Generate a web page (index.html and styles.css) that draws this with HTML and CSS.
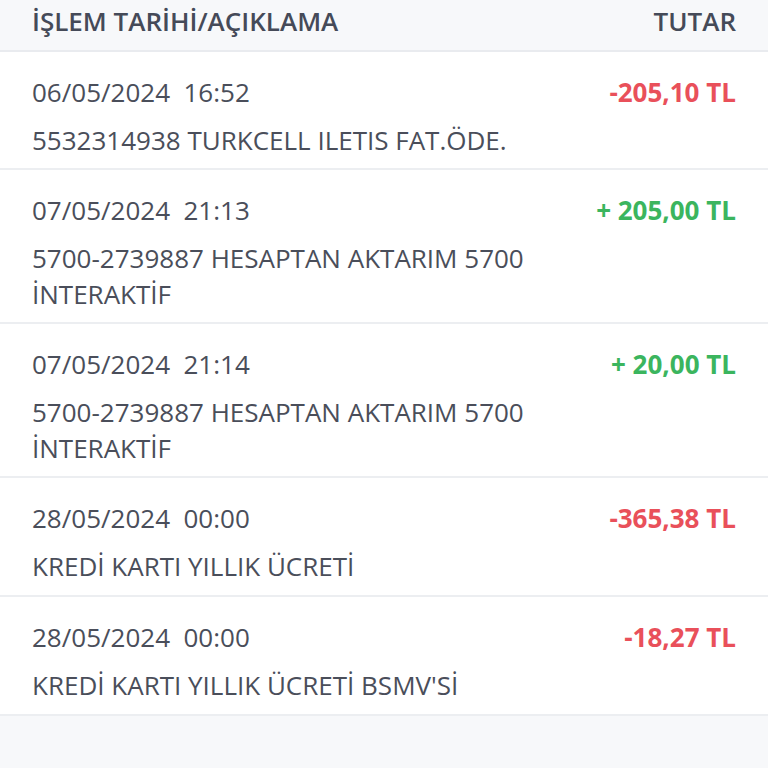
FILE: index.html
```html
<!DOCTYPE html>
<html lang="tr">
<head>
  <meta charset="UTF-8">
  <meta name="viewport" content="width=device-width, initial-scale=1.0">
  <title>Hesap Hareketleri</title>
  <link rel="stylesheet" href="styles.css">
</head>
<body>
  <div class="list-header">
    <span>İŞLEM TARİHİ/AÇIKLAMA</span>
    <span>TUTAR</span>
  </div>
  <div class="tx-list">
    <div class="tx">
      <div class="tx-top">
        <span class="tx-date">06/05/2024&nbsp;&nbsp;16:52</span>
        <span class="tx-amount minus">-205,10 TL</span>
      </div>
      <div class="tx-desc">5532314938 TURKCELL ILETIS FAT.ÖDE.</div>
    </div>
    <div class="tx">
      <div class="tx-top">
        <span class="tx-date">07/05/2024&nbsp;&nbsp;21:13</span>
        <span class="tx-amount plus">+ 205,00 TL</span>
      </div>
      <div class="tx-desc">5700-2739887 HESAPTAN AKTARIM 5700<br>İNTERAKTİF</div>
    </div>
    <div class="tx">
      <div class="tx-top">
        <span class="tx-date">07/05/2024&nbsp;&nbsp;21:14</span>
        <span class="tx-amount plus">+ 20,00 TL</span>
      </div>
      <div class="tx-desc">5700-2739887 HESAPTAN AKTARIM 5700<br>İNTERAKTİF</div>
    </div>
    <div class="tx">
      <div class="tx-top">
        <span class="tx-date">28/05/2024&nbsp;&nbsp;00:00</span>
        <span class="tx-amount minus">-365,38 TL</span>
      </div>
      <div class="tx-desc">KREDİ KARTI YILLIK ÜCRETİ</div>
    </div>
    <div class="tx">
      <div class="tx-top">
        <span class="tx-date">28/05/2024&nbsp;&nbsp;00:00</span>
        <span class="tx-amount minus">-18,27 TL</span>
      </div>
      <div class="tx-desc">KREDİ KARTI YILLIK ÜCRETİ BSMV'Sİ</div>
    </div>
  </div>
</body>
</html>
```

FILE: styles.css
```css
body {
  margin: 0;
  font-family: "Open Sans", "Noto Sans", sans-serif;
  background-color: #f7f8fa;
  color: #4a4e5a;
}
.list-header {
  display: flex;
  justify-content: space-between;
  align-items: center;
  box-sizing: border-box;
  height: 52px;
  padding: 0 32px 8px;
  font-size: 26px;
  font-weight: 600;
  color: #454a58;
  background-color: #f7f8fa;
  border-bottom: 2px solid #e9ebef;
}
.tx-list {
  background-color: #fff;
}
.tx {
  padding: 22px 32px 10px;
  border-bottom: 2px solid #eceef1;
  font-size: 26px;
  line-height: 36px;
}
.tx:nth-child(n+4) {
  padding-bottom: 11px;
}
.tx-top {
  display: flex;
  justify-content: space-between;
  margin-bottom: 12px;
}
.tx-amount {
  font-weight: 700;
}
.minus {
  color: #e9505a;
}
.plus {
  color: #3bb55e;
}
```
